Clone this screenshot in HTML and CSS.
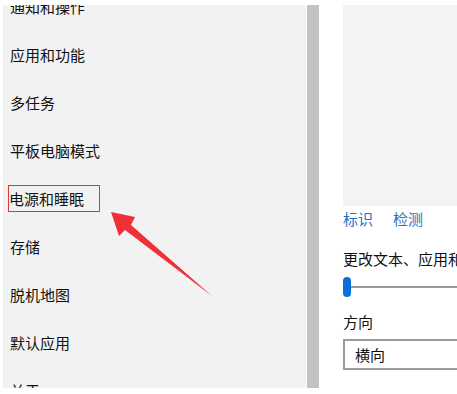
FILE: index.html
```html
<!DOCTYPE html>
<html lang="zh-CN">
<head>
    <meta charset="UTF-8">
    <title>设置 - 系统</title>
    <link rel="stylesheet" href="styles.css">
</head>
<body>
    <div class="page">
        <div class="sidebar">
            <ul class="nav-list">
                <li>通知和操作</li>
                <li>应用和功能</li>
                <li>多任务</li>
                <li>平板电脑模式</li>
                <li><span class="marked">电源和睡眠</span></li>
                <li>存储</li>
                <li>脱机地图</li>
                <li>默认应用</li>
                <li>关于</li>
            </ul>
        </div>
        <div class="scrollbar"></div>

        <div class="content">
            <div class="preview"></div>
            <div class="links">
                <a class="link">标识</a>
                <a class="link">检测</a>
            </div>
            <div class="label scale-label">更改文本、应用和其他项目的大小</div>
            <div class="slider">
                <span class="thumb"></span>
                <span class="track"></span>
            </div>
            <div class="label orient-label">方向</div>
            <div class="select">横向</div>
        </div>

        <svg class="arrow" width="457" height="394" viewBox="0 0 457 394">
            <polygon points="111,212 135,217 131,225 212,296 125,230 119,236" fill="#ef3137"/>
        </svg>
    </div>
</body>
</html>
```

FILE: styles.css
```css
body {
    margin: 0;
    background-color: #fff;
    font-family: "Microsoft YaHei", "Noto Sans CJK SC", sans-serif;
    color: #111;
}

.page {
    position: relative;
    width: 457px;
    height: 394px;
    overflow: hidden;
    display: flex;
    padding-top: 5px;
    box-sizing: border-box;
}

.sidebar {
    width: 303px;
    height: 383px;
    margin-left: 3px;
    background-color: #f2f2f2;
    overflow: hidden;
    flex-shrink: 0;
}

.nav-list {
    list-style: none;
    margin: -22px 0 0 0;
    padding: 0 0 0 7px;
}

.nav-list li {
    height: 48px;
    line-height: 48px;
    font-size: 15px;
}

.marked {
    display: inline-block;
    line-height: 19px;
    padding: 3px 15px 3px 0;
    margin-left: -2px;
    border: 1px solid #e0353b;
}

.scrollbar {
    width: 12px;
    height: 383px;
    margin-left: 1px;
    background-color: #c3c3c3;
    flex-shrink: 0;
}

.content {
    margin-left: 24px;
    width: 220px;
    flex-shrink: 0;
    display: flex;
    flex-direction: column;
}

.preview {
    height: 201px;
    background-color: #f3f3f3;
}

.links {
    display: flex;
    gap: 20px;
    margin-top: 3px;
    font-size: 15px;
    line-height: 20px;
}

.link {
    color: #1f73c4;
}

.label {
    font-size: 15px;
    line-height: 20px;
    white-space: nowrap;
}

.scale-label {
    margin-top: 20px;
}

.slider {
    display: flex;
    align-items: center;
    height: 20px;
    margin-top: 8px;
}

.thumb {
    width: 8px;
    height: 20px;
    border-radius: 4px;
    background-color: #0a6fd6;
}

.track {
    flex: 1;
    height: 2px;
    background-color: #9a9a9a;
}

.orient-label {
    margin-top: 15px;
}

.select {
    margin-top: 7px;
    height: 27px;
    line-height: 27px;
    border: 2px solid #9b9b9b;
    padding-left: 10px;
    font-size: 15px;
}

.arrow {
    position: absolute;
    left: 0;
    top: 0;
}
```
